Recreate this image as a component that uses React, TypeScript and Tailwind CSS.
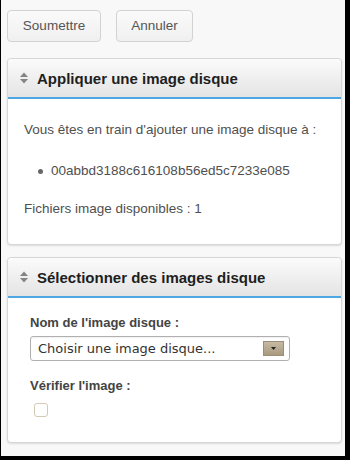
import React from 'react'

function SortIcon() {
  return (
    <svg width="8" height="12" viewBox="0 0 8 12" className="shrink-0">
      <polygon points="0,5 4,0.5 8,5" fill="#848484" />
      <polygon points="0,7 8,7 4,11.5" fill="#848484" />
    </svg>
  )
}

function Panel({ title, children }: { title: string; children: React.ReactNode }) {
  return (
    <section className="rounded-[4px] border border-[#d6d6d6] bg-white shadow-[0_1px_2px_rgba(0,0,0,0.12)]">
      <div className="h-[40px] flex items-center gap-[9px] pl-[12px] rounded-t-[4px] border-b-2 border-[#4ea6e2] bg-gradient-to-b from-[#fbfbfb] to-[#e4e4e4]">
        <SortIcon />
        <h2 className="text-[15px] font-bold text-[#1e1e1e] leading-none">{title}</h2>
      </div>
      {children}
    </section>
  )
}

export default function App() {
  return (
    <div
      className="w-[350px] h-[460px] bg-[#f8f8f8] border-l border-r-[5px] border-b-4 border-black pt-[10px] pl-[6px]"
      style={{ fontFamily: '"Liberation Sans", Arial, sans-serif' }}
    >
      {/* Actions */}
      <div className="flex gap-[15px]">
        <button className="w-[94px] h-[32px] rounded-[4px] border border-[#d2d2d2] bg-gradient-to-b from-[#fafafa] to-[#f0f0f0] text-[13.5px] text-[#555]">
          Soumettre
        </button>
        <button className="w-[77px] h-[32px] rounded-[4px] border border-[#d2d2d2] bg-gradient-to-b from-[#fafafa] to-[#f0f0f0] text-[13.5px] text-[#555]">
          Annuler
        </button>
      </div>

      <div className="w-[335px] mt-[16px] flex flex-col gap-[12px]">
        <Panel title="Appliquer une image disque">
          <div className="h-[145px] px-[16px] pt-[22px] text-[13.5px] leading-[18px] text-[#4f4f4f]">
            <p>Vous êtes en train d'ajouter une image disque à :</p>
            <ul className="mt-[23px] pl-[14px]">
              <li className="flex items-center gap-[8px]">
                <span className="w-[5px] h-[5px] rounded-full bg-[#666]" />
                00abbd3188c616108b56ed5c7233e085
              </li>
            </ul>
            <p className="mt-[20px]">Fichiers image disponibles : 1</p>
          </div>
        </Panel>

        <Panel title="Sélectionner des images disque">
          <div className="h-[144px] pl-[22px] pt-[17px]">
            <label className="block text-[13px] leading-[16px] font-bold text-[#444]">
              Nom de l'image disque :
            </label>
            <div className="mt-[5px] w-[260px] h-[25px] rounded-[3px] border border-[#b0b0b0] bg-white flex items-center justify-between pl-[7px] pr-[5px] shadow-[inset_0_1px_1px_rgba(0,0,0,0.06)]">
              <span
                className="text-[13px] text-[#333]"
                style={{ fontFamily: '"DejaVu Sans", sans-serif' }}
              >
                Choisir une image disque...
              </span>
              <span className="w-[21px] h-[15px] border border-[#9b8e77] bg-gradient-to-b from-[#c6b9a2] to-[#a99a80] flex items-center justify-center">
                <svg width="5" height="3" viewBox="0 0 5 3">
                  <polygon points="0,0 5,0 2.5,3" fill="#222" />
                </svg>
              </span>
            </div>
            <label className="block mt-[17px] text-[13px] leading-[16px] font-bold text-[#444]">
              Vérifier l'image :
            </label>
            <div className="mt-[9px] ml-[4px] w-[14px] h-[14px] rounded-[3px] border border-[#d3c9b5] bg-white" />
          </div>
        </Panel>
      </div>
    </div>
  )
}
